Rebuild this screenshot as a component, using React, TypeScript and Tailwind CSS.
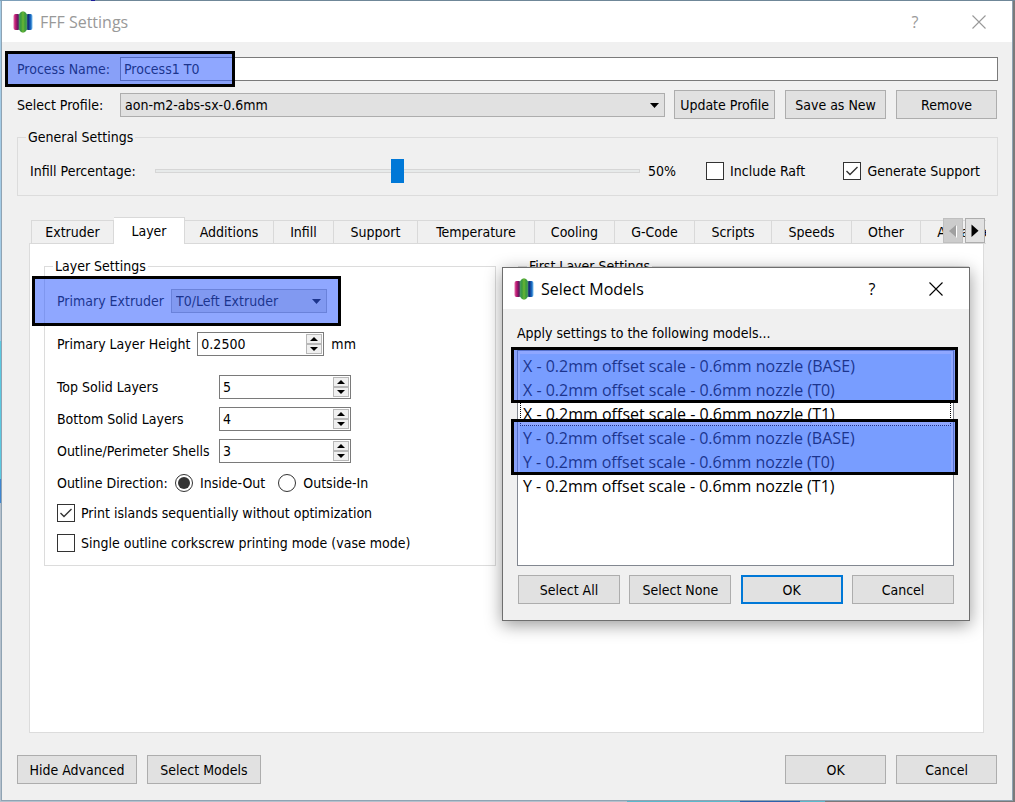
import { useState } from "react";
import type { ReactNode } from "react";

function AppIcon() {
  return (
    <svg viewBox="0 0 20 22" className="h-[22px] w-5 shrink-0" aria-hidden="true">
      <defs>
        <linearGradient id="magenta" x1="0" x2="1">
          <stop offset="0" stopColor="#e06aa6" />
          <stop offset="0.35" stopColor="#b8146f" />
          <stop offset="0.7" stopColor="#5c1a5c" />
          <stop offset="1" stopColor="#6a4a84" />
        </linearGradient>
        <linearGradient id="blue" x1="0" x2="1">
          <stop offset="0" stopColor="#3a3f80" />
          <stop offset="0.35" stopColor="#122a78" />
          <stop offset="0.7" stopColor="#1768c0" />
          <stop offset="1" stopColor="#7cc0ee" />
        </linearGradient>
        <linearGradient id="green" x1="0" x2="1">
          <stop offset="0" stopColor="#4a9c6c" />
          <stop offset="0.25" stopColor="#3a9a3c" />
          <stop offset="0.5" stopColor="#6ab534" />
          <stop offset="0.75" stopColor="#3a9a3c" />
          <stop offset="1" stopColor="#4a9c6c" />
        </linearGradient>
      </defs>
      <rect x="0.5" y="3" width="6.5" height="16" rx="2" fill="url(#magenta)" />
      <rect x="13" y="3" width="6.5" height="16" rx="2" fill="url(#blue)" />
      <path d="M5.800 3.500 Q10 -3 14.200 3.500 V18.500 Q10 25 5.800 18.500 Z" fill="url(#green)" />
    </svg>
  );
}

function CloseGlyph() {
  return (
    <svg viewBox="0 0 14 14" className="h-[14px] w-[14px]" aria-hidden="true">
      <path d="M0.5 0.5 L13.5 13.5 M13.5 0.5 L0.5 13.5" stroke="currentColor" strokeWidth="1.1" fill="none" />
    </svg>
  );
}

function TitleBar({ title, tone }: { title: string; tone: string }) {
  return (
    <header className={`flex h-[41px] items-center bg-white pl-[11px] pr-px font-['Open_Sans',sans-serif] ${tone}`}>
      <AppIcon />
      <h2 className="grow pl-[7px] text-base">{title}</h2>
      <button type="button" aria-label="Help" className="flex h-full w-16 items-center justify-center text-base">
        ?
      </button>
      <button type="button" aria-label="Close" className="flex h-full w-16 items-center justify-center">
        <CloseGlyph />
      </button>
    </header>
  );
}

function PushButton({ children, width, primary }: { children: ReactNode; width: string; primary?: boolean }) {
  const edge = primary ? "border-2 border-[#0078d7]" : "border border-[#adadad]";
  return (
    <button type="button" className={`h-[29px] shrink-0 whitespace-nowrap bg-[#e1e1e1] ${edge} ${width}`}>
      {children}
    </button>
  );
}

function Combo({ id, value, width }: { id: string; value: string; width: string }) {
  return (
    <span className={`relative flex ${width}`}>
      <select
        id={id}
        defaultValue={value}
        className="h-6 w-full appearance-none border border-[#adadad] bg-[#e1e1e1] pl-1 pr-6"
      >
        <option>{value}</option>
      </select>
      <svg viewBox="0 0 9 5" className="pointer-events-none absolute right-[6px] top-[10px] h-[5px] w-[9px]" aria-hidden="true">
        <path d="M0 0 H9 L4.500 5 Z" fill="black" />
      </svg>
    </span>
  );
}

function SpinBox({ id, initial, step, digits, width }: { id: string; initial: number; step: number; digits: number; width: string }) {
  const [value, setValue] = useState(initial.toFixed(digits));
  const bump = (by: number) => setValue((Number(value) + by).toFixed(digits));
  return (
    <span className={`flex h-6 border border-[#7a7a7a] bg-white p-px ${width}`}>
      <input
        id={id}
        value={value}
        onChange={(event) => setValue(event.target.value)}
        className="min-w-0 grow bg-transparent pl-[2px] outline-none"
      />
      <span className="flex w-4 shrink-0 flex-col">
        <button type="button" aria-label="Increase" onClick={() => bump(step)} className="flex h-[10px] w-full items-center justify-center border border-[#b8b8b8] bg-[#f0f0f0]">
          <svg viewBox="0 0 8 4" className="h-1 w-2" aria-hidden="true">
            <path d="M0 4 H8 L4 0 Z" fill="black" />
          </svg>
        </button>
        <button type="button" aria-label="Decrease" onClick={() => bump(-step)} className="flex h-[10px] w-full items-center justify-center border border-[#b8b8b8] bg-[#f0f0f0]">
          <svg viewBox="0 0 8 4" className="h-1 w-2" aria-hidden="true">
            <path d="M0 0 H8 L4 4 Z" fill="black" />
          </svg>
        </button>
      </span>
    </span>
  );
}

function Tick({ label, checked }: { label: string; checked?: boolean }) {
  return (
    <label className="flex items-center gap-[6px] whitespace-nowrap">
      <span className="relative flex">
        <input type="checkbox" defaultChecked={checked} className="peer h-[18px] w-[18px] appearance-none border border-[#333333] bg-white" />
        <svg viewBox="0 0 18 18" className="pointer-events-none absolute inset-0 hidden h-[18px] w-[18px] peer-checked:block" aria-hidden="true">
          <path d="M3.500 9 L7 12.500 L14.500 5" stroke="#333333" strokeWidth="1.400" fill="none" />
        </svg>
      </span>
      {label}
    </label>
  );
}

function Choice({ label, checked }: { label: string; checked?: boolean }) {
  return (
    <label className="flex items-center gap-[7px] whitespace-nowrap">
      <span className="relative flex">
        <input type="radio" name="direction" defaultChecked={checked} className="peer h-[18px] w-[18px] appearance-none rounded-full border border-[#333333] bg-white" />
        <span className="pointer-events-none absolute left-[3px] top-[3px] hidden h-3 w-3 rounded-full bg-[#333333] peer-checked:block" />
      </span>
      {label}
    </label>
  );
}

function Highlight({ place }: { place: string }) {
  return <span className={`pointer-events-none absolute z-10 border-[3px] border-black bg-[#335fff]/55 ${place}`} />;
}

const tabs = [
  { name: "Extruder", width: "w-[83px]" },
  { name: "Layer", width: "w-[71px]" },
  { name: "Additions", width: "w-[89px]" },
  { name: "Infill", width: "w-[60px]" },
  { name: "Support", width: "w-[84px]" },
  { name: "Temperature", width: "w-[117px]" },
  { name: "Cooling", width: "w-[80px]" },
  { name: "G-Code", width: "w-[80px]" },
  { name: "Scripts", width: "w-[77px]" },
  { name: "Speeds", width: "w-[80px]" },
  { name: "Other", width: "w-[69px]" },
  { name: "Advanced", width: "w-[96px]" },
];

function TabBar() {
  const [active, setActive] = useState("Layer");
  return (
    <div className="relative z-[1] -mb-px ml-[14px] mr-3 overflow-hidden">
      <div role="tablist" className="flex h-[27px] items-end">
        {tabs.map((tab) => (
          <button
            key={tab.name}
            type="button"
            role="tab"
            aria-selected={tab.name === active}
            onClick={() => setActive(tab.name)}
            className={`shrink-0 border-t border-r border-[#d9d9d9] first:border-l ${tab.width} ${
              tab.name === active ? "h-[27px] bg-white pb-px" : "h-6 border-b bg-[#f0f0f0]"
            }`}
          >
            {tab.name}
          </button>
        ))}
      </div>
      <div className="absolute right-px top-px flex gap-[2px]">
        <button type="button" aria-label="Scroll tabs left" className="flex h-[25px] w-5 items-center justify-center border border-[#bfbfbf] bg-[#cccccc]">
          <svg viewBox="0 0 8 14" className="h-[14px] w-2" aria-hidden="true">
            <path d="M7 2 V13.500 H8 V1.500 Z" fill="white" />
            <path d="M7 1 V13 L0 7 Z" fill="#a0a0a0" />
          </svg>
        </button>
        <button type="button" aria-label="Scroll tabs right" className="flex h-[25px] w-5 items-center justify-center border border-[#adadad] bg-[#e1e1e1]">
          <svg viewBox="0 0 8 14" className="h-[14px] w-2" aria-hidden="true">
            <path d="M0.500 0.500 V13 L7.500 6.800 Z" fill="black" />
          </svg>
        </button>
      </div>
    </div>
  );
}

function LayerSettings() {
  return (
    <fieldset className="relative h-[308px] w-[452px] shrink-0 border border-[#dcdcdc] px-3">
      <legend className="-ml-1 h-4 px-[2px] leading-4">Layer Settings</legend>
      <div className="flex flex-col gap-[19px] pt-[15px]">
        <div className="flex items-center gap-[7px]">
          <label htmlFor="extruder" className="whitespace-nowrap">Primary Extruder</label>
          <Combo id="extruder" value="T0/Left Extruder" width="w-[156px]" />
        </div>
        <div className="flex items-center gap-[7px]">
          <label htmlFor="height" className="whitespace-nowrap">Primary Layer Height</label>
          <SpinBox id="height" initial={0.25} step={0.05} digits={4} width="w-[127px]" />
          <span>mm</span>
        </div>
        <div className="flex flex-col gap-2">
          <div className="flex items-center">
            <label htmlFor="top" className="w-[162px] whitespace-nowrap">Top Solid Layers</label>
            <SpinBox id="top" initial={5} step={1} digits={0} width="w-[132px]" />
          </div>
          <div className="flex items-center">
            <label htmlFor="bottom" className="w-[162px] whitespace-nowrap">Bottom Solid Layers</label>
            <SpinBox id="bottom" initial={4} step={1} digits={0} width="w-[132px]" />
          </div>
          <div className="flex items-center">
            <label htmlFor="shells" className="w-[162px] whitespace-nowrap">Outline/Perimeter Shells</label>
            <SpinBox id="shells" initial={3} step={1} digits={0} width="w-[132px]" />
          </div>
          <div className="flex flex-col gap-3 pt-[3px]">
            <div className="flex items-center">
              <span className="w-[118px] whitespace-nowrap">Outline Direction:</span>
              <div className="flex gap-[13px]">
                <Choice label="Inside-Out" checked />
                <Choice label="Outside-In" />
              </div>
            </div>
            <Tick label="Print islands sequentially without optimization" checked />
            <Tick label="Single outline corkscrew printing mode (vase mode)" />
          </div>
        </div>
      </div>
      <Highlight place="-left-[13px] top-[2px] h-[50px] w-[309px]" />
    </fieldset>
  );
}

const models = [
  { name: "X - 0.2mm offset scale - 0.6mm nozzle (BASE)", look: "bg-[#cce8ff]" },
  { name: "X - 0.2mm offset scale - 0.6mm nozzle (T0)", look: "bg-[#cce8ff]" },
  { name: "X - 0.2mm offset scale - 0.6mm nozzle (T1)", look: "outline-1 -outline-offset-1 outline-dotted outline-black" },
  { name: "Y - 0.2mm offset scale - 0.6mm nozzle (BASE)", look: "bg-[#cce8ff]" },
  { name: "Y - 0.2mm offset scale - 0.6mm nozzle (T0)", look: "bg-[#cce8ff]" },
  { name: "Y - 0.2mm offset scale - 0.6mm nozzle (T1)", look: "" },
];

function SelectModels() {
  return (
    <section role="dialog" aria-label="Select Models" className="absolute left-[502px] top-[267px] z-20 w-[468px] border border-[#6e6e6e] bg-[#f0f0f0] shadow-[0_4px_16px_rgba(0,0,0,0.4)]">
      <TitleBar title="Select Models" tone="text-black" />
      <div className="pb-4 pl-[14px] pr-[15px] pt-[14px]">
        <p className="leading-5">Apply settings to the following models...</p>
        <div className="relative mt-[7px]">
          <ul role="listbox" className="h-[216px] border border-[#828790] bg-white px-[2px] py-[3px] font-['Open_Sans',sans-serif] text-base">
            {models.map((model) => (
              <li key={model.name} role="option" aria-selected={model.look.startsWith("bg")} className={`h-6 whitespace-pre pl-[3px] leading-6 ${model.look}`}>
                {model.name}
              </li>
            ))}
          </ul>
          <Highlight place="-left-[6px] -top-[3px] h-[56px] w-[447px]" />
          <Highlight place="-left-[6px] top-[69px] h-[56px] w-[447px]" />
        </div>
        <div className="mt-[9px] flex justify-between pl-px">
          <PushButton width="w-[102px]">Select All</PushButton>
          <PushButton width="w-[102px]">Select None</PushButton>
          <PushButton width="w-[102px]" primary>OK</PushButton>
          <PushButton width="w-[102px]">Cancel</PushButton>
        </div>
      </div>
    </section>
  );
}

export default function App() {
  return (
    <div className="relative flex min-h-screen flex-col bg-[#7a7a7a] font-['DejaVu_Sans_Condensed','DejaVu_Sans',sans-serif] text-sm leading-4 text-black">
      <div className="flex h-px">
        <div className="w-[91px] bg-[#7d9fb9]" />
        <div className="w-1 bg-[#1c1c9c]" />
        <div className="grow bg-[#6f8798]" />
      </div>
      <div className="flex grow">
        <div className="flex w-px flex-col">
          <div className="h-[340px] bg-[#a3cbe6]" />
          <div className="h-[138px] bg-[#5cc8e0]" />
          <div className="h-6 bg-[#3f86d0]" />
          <div className="grow bg-[#b4c0cc]" />
        </div>
        <main className="flex min-w-0 grow flex-col border border-t-0 border-[#8fa3b3] bg-[#f0f0f0]">
          <TitleBar title="FFF Settings" tone="text-[#999999]" />
          <form className="flex grow flex-col pb-4 pl-[15px] pr-[14px] pt-[15px]" onSubmit={(event) => event.preventDefault()}>
            <div className="relative flex items-center">
              <label htmlFor="process" className="w-[103px] shrink-0 whitespace-nowrap">Process Name:</label>
              <input id="process" defaultValue="Process1 T0" className="h-6 min-w-0 grow border border-[#7a7a7a] bg-white pl-[3px]" />
              <Highlight place="-left-3 -top-[6px] h-9 w-[230px]" />
            </div>
            <div className="mt-[9px] flex items-center pr-px">
              <label htmlFor="profile" className="w-[103px] shrink-0 whitespace-nowrap">Select Profile:</label>
              <Combo id="profile" value="aon-m2-abs-sx-0.6mm" width="min-w-0 grow" />
              <div className="ml-[9px] flex gap-[10px]">
                <PushButton width="w-[101px]">Update Profile</PushButton>
                <PushButton width="w-[101px]">Save as New</PushButton>
                <PushButton width="w-[101px]">Remove</PushButton>
              </div>
            </div>
            <fieldset className="mt-[10px] border border-[#dcdcdc] px-3">
              <legend className="-ml-1 h-4 px-[2px] leading-4">General Settings</legend>
              <div className="flex items-center pb-3 pt-[14px]">
                <label htmlFor="infill" className="w-[125px] shrink-0 whitespace-nowrap">Infill Percentage:</label>
                <input
                  id="infill"
                  type="range"
                  defaultValue={50}
                  className="h-6 min-w-0 grow appearance-none bg-transparent [&::-webkit-slider-runnable-track]:h-1 [&::-webkit-slider-runnable-track]:border [&::-webkit-slider-runnable-track]:border-[#d6d6d6] [&::-webkit-slider-runnable-track]:bg-[#e7eaea] [&::-webkit-slider-thumb]:-mt-[11px] [&::-webkit-slider-thumb]:h-6 [&::-webkit-slider-thumb]:w-[13px] [&::-webkit-slider-thumb]:appearance-none [&::-webkit-slider-thumb]:bg-[#0078d7]"
                />
                <output htmlFor="infill" className="ml-2 w-[58px]">50%</output>
                <div className="flex w-[279px] justify-between pr-[5px]">
                  <Tick label="Include Raft" />
                  <Tick label="Generate Support" checked />
                </div>
              </div>
            </fieldset>
            <div className="mt-[21px]">
              <TabBar />
            </div>
            <div role="tabpanel" className="ml-3 mr-[14px] flex grow gap-[22px] border border-[#dcdcdc] bg-white px-[14px] pt-[14px]">
              <LayerSettings />
              <fieldset className="h-[308px] min-w-0 grow border border-[#dcdcdc] px-3">
                <legend className="-ml-1 h-4 px-[2px] leading-4">First Layer Settings</legend>
              </fieldset>
            </div>
            <div className="mt-[22px] flex gap-[10px] pr-px">
              <PushButton width="w-[120px]">Hide Advanced</PushButton>
              <PushButton width="w-[114px]">Select Models</PushButton>
              <div className="grow" />
              <PushButton width="w-[101px]">OK</PushButton>
              <PushButton width="w-[101px]">Cancel</PushButton>
            </div>
          </form>
        </main>
        <div className="w-[2px] bg-[#7a7a7a]" />
      </div>
      <div className="flex h-px">
        <div className="w-[627px] bg-[#b4c0cc]" />
        <div className="w-[113px] bg-[#5cb8cc]" />
        <div className="w-[60px] bg-[#2d62ac]" />
        <div className="w-[25px] bg-[#5cb8cc]" />
        <div className="grow bg-[#7a7a7a]" />
      </div>
      <SelectModels />
    </div>
  );
}
